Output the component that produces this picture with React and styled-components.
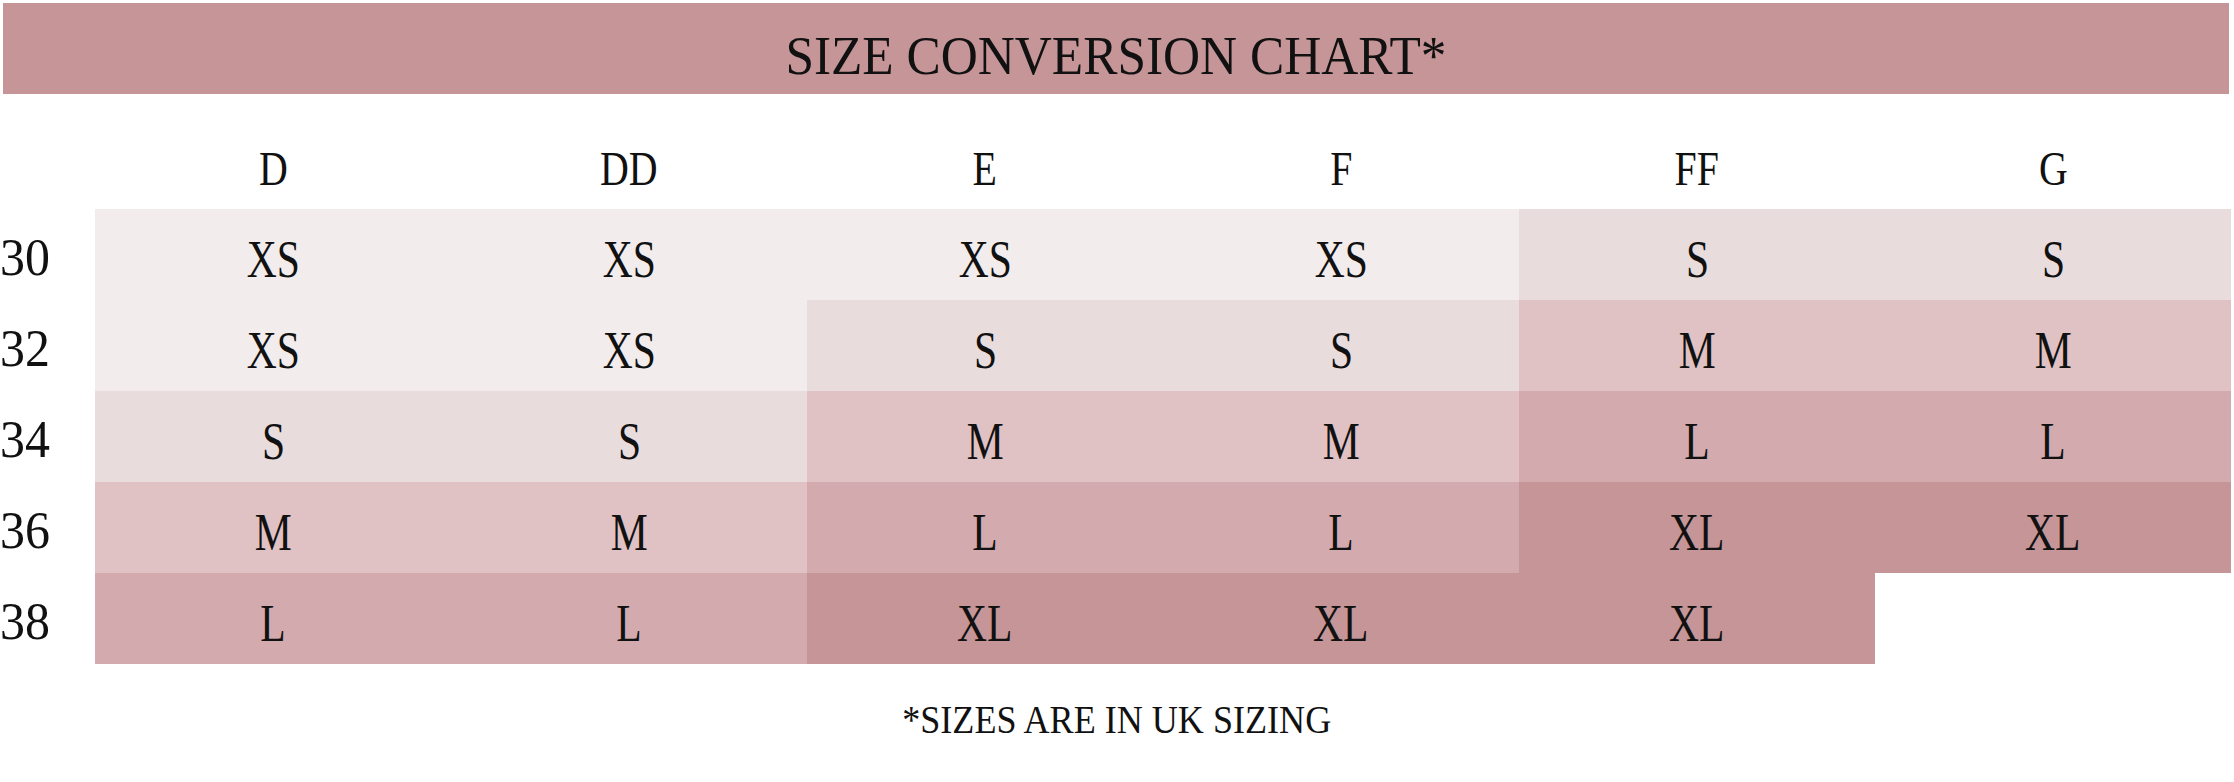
import React from 'react';
import styled, { createGlobalStyle } from 'styled-components';

const GlobalStyle = createGlobalStyle`
	html, body {
		margin: 0;
		padding: 0;
		background: #ffffff;
	}
	body {
		font-family: "Liberation Serif", "Times New Roman", serif;
		color: #111111;
	}
`;

const tones = {
	XS: '#f2ecec',
	S: '#e9dcdd',
	M: '#e0c2c4',
	L: '#d3abaf',
	XL: '#c59598',
};

const cups = ['D', 'DD', 'E', 'F', 'FF', 'G'];

const rows = [
	{ band: '30', sizes: ['XS', 'XS', 'XS', 'XS', 'S', 'S'] },
	{ band: '32', sizes: ['XS', 'XS', 'S', 'S', 'M', 'M'] },
	{ band: '34', sizes: ['S', 'S', 'M', 'M', 'L', 'L'] },
	{ band: '36', sizes: ['M', 'M', 'L', 'L', 'XL', 'XL'] },
	{ band: '38', sizes: ['L', 'L', 'XL', 'XL', 'XL', null] },
];

const Page = styled.div`
	width: 2234px;
	padding: 3px 5px 0 3px;
	box-sizing: border-box;
`;

const TitleBar = styled.div`
	height: 91px;
	box-sizing: border-box;
	padding-top: 26px;
	background: #c59598;
	display: flex;
	justify-content: center;
	font-size: 54px;
	line-height: 54px;
`;

const Glyph = styled.span`
	display: inline-block;
	white-space: nowrap;
	transform: scaleX(${(p) => p.$squeeze || 1});
	transform-origin: ${(p) => (p.$left ? 'left center' : 'center')};
`;

const Chart = styled.div`
	display: grid;
	grid-template-columns: 95px repeat(6, 356px);
	grid-template-rows: 115px repeat(5, 91px);
	margin-left: -3px;
`;

const CupHead = styled.div`
	display: flex;
	justify-content: center;
	align-items: flex-end;
	padding-bottom: 16px;
	font-size: 48px;
	line-height: 48px;
`;

const BandLabel = styled.div`
	display: flex;
	align-items: center;
	padding-top: 6px;
	font-size: 52px;
	line-height: 52px;
`;

const Cell = styled.div`
	display: flex;
	justify-content: center;
	align-items: center;
	padding-top: 11px;
	box-sizing: border-box;
	background: ${(p) => (p.$tone ? tones[p.$tone] : 'transparent')};
	font-size: 52px;
	line-height: 52px;
`;

const Footnote = styled.div`
	margin-top: 35px;
	margin-left: -3px;
	width: 2234px;
	text-align: center;
	font-size: 41px;
	line-height: 41px;
`;

const App = () => {
	return (
		<React.Fragment>
			<GlobalStyle />
			<Page>
				<TitleBar>
					<Glyph $squeeze={0.95}>SIZE CONVERSION CHART*</Glyph>
				</TitleBar>
				<Chart>
					<div />
					{cups.map((cup) => (
						<CupHead key={cup}>
							<Glyph $squeeze={0.83}>{cup}</Glyph>
						</CupHead>
					))}
					{rows.map((row) => (
						<React.Fragment key={row.band}>
							<BandLabel>
								<Glyph $squeeze={0.96} $left>
									{row.band}
								</Glyph>
							</BandLabel>
							{row.sizes.map((size, i) => (
								<Cell key={i} $tone={size}>
									{size && <Glyph $squeeze={0.8}>{size}</Glyph>}
								</Cell>
							))}
						</React.Fragment>
					))}
				</Chart>
				<Footnote>
					<Glyph $squeeze={0.88}>*SIZES ARE IN UK SIZING</Glyph>
				</Footnote>
			</Page>
		</React.Fragment>
	);
};

export default App;
